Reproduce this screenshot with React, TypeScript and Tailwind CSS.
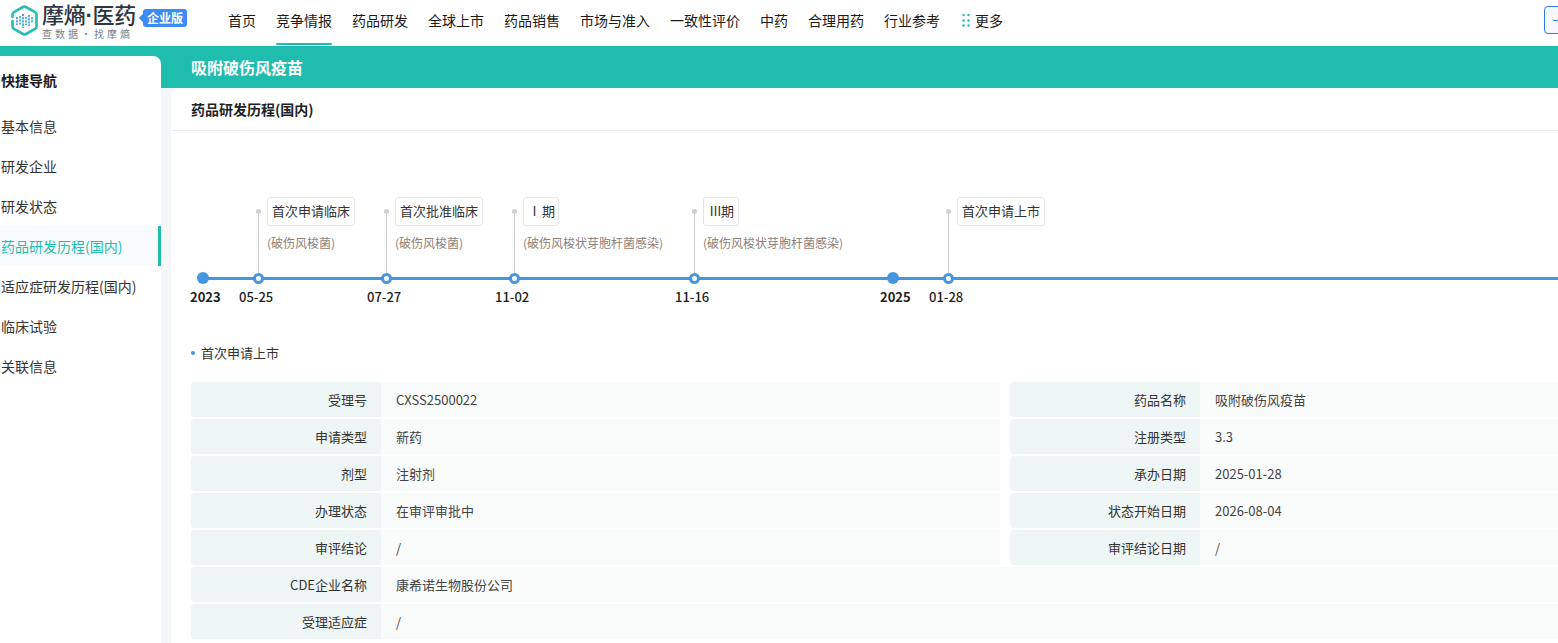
const navItems = ["首页", "竞争情报", "药品研发", "全球上市", "药品销售", "市场与准入", "一致性评价", "中药", "合理用药", "行业参考"];

const sideItems = ["基本信息", "研发企业", "研发状态", "药品研发历程(国内)", "适应症研发历程(国内)", "临床试验", "关联信息"];

type Milestone = {
  date: string;
  label?: string;
  note?: string;
  width: string;
  year?: boolean;
  narrow?: boolean;
};

const milestones: Milestone[] = [
  { date: "2023", width: "w-[67px]", year: true },
  { date: "05-25", label: "首次申请临床", note: "(破伤风梭菌)", width: "w-[128px]" },
  { date: "07-27", label: "首次批准临床", note: "(破伤风梭菌)", width: "w-[128px]" },
  { date: "11-02", label: "Ⅰ 期", note: "(破伤风梭状芽胞杆菌感染)", width: "w-[180px]", narrow: true },
  { date: "11-16", label: "Ⅲ期", note: "(破伤风梭状芽胞杆菌感染)", width: "w-[187px]", narrow: true },
  { date: "2025", width: "w-[67px]", year: true },
  { date: "01-28", label: "首次申请上市", width: "w-[200px]" },
];

const rows: [string, string, string?, string?][] = [
  ["受理号", "CXSS2500022", "药品名称", "吸附破伤风疫苗"],
  ["申请类型", "新药", "注册类型", "3.3"],
  ["剂型", "注射剂", "承办日期", "2025-01-28"],
  ["办理状态", "在审评审批中", "状态开始日期", "2026-08-04"],
  ["审评结论", "/", "审评结论日期", "/"],
  ["CDE企业名称", "康希诺生物股份公司"],
  ["受理适应症", "/"],
];

const Logo = () => (
  <div className="flex items-center w-[187px] ml-[11px] shrink-0">
    <svg width="27" height="31" viewBox="0 0 27 31" className="shrink-0 mb-[6px]">
      <path
        d="M1.5 12 V9.5 Q1.5 8 3 7.2 L12 2 Q13.5 1.2 15 2 L24 7.2 Q25.5 8 25.5 9.5 V21.5 Q25.5 23 24 23.8 L15 29 Q13.5 29.8 12 29 L3 23.8 Q1.5 23 1.5 21.5 V16"
        fill="none"
        stroke="#25bdb4"
        strokeWidth="2.6"
        strokeLinecap="round"
      />
      <path d="M6 12v8M12 9v14M18 10v11" stroke="#3a8fe6" strokeWidth="1.7" strokeDasharray="2.2 1" />
      <path d="M9 11v9M15 12v8M21 12v6" stroke="#25bdb4" strokeWidth="1.7" strokeDasharray="2.2 1" />
    </svg>
    <div className="flex flex-col ml-[4px] w-[95px] mb-[6px]">
      <span className="text-[22px] leading-[24px] font-medium text-[#2c3440] whitespace-nowrap tracking-[-0.25px]">
        摩熵<span className="font-['Liberation_Sans'] font-bold">·</span>医药
      </span>
      <span className="text-[10px] leading-[11px] text-[#7a8087] whitespace-nowrap tracking-[3px]">查数据·找摩熵</span>
    </div>
    <div className="relative ml-[6px] mb-[10px] h-[18px] w-[44px] bg-[#3d8bf7] rounded-[3px] flex items-center justify-center text-[12px] font-bold text-white whitespace-nowrap">
      <span className="absolute left-[-3px] top-[6px] w-[6px] h-[6px] bg-[#3d8bf7] rotate-45" />
      <span className="relative">企业版</span>
    </div>
  </div>
);

const Header = () => (
  <header className="h-[46px] bg-white flex items-stretch shrink-0">
    <Logo />
    <nav className="flex gap-[20px] ml-[30px] shrink-0">
      {navItems.map((item) => (
        <div
          key={item}
          className={
            item === "竞争情报"
              ? "relative h-[45px] pb-[4px] flex items-center text-[14px] text-[#1a1a1a] whitespace-nowrap"
              : "h-[45px] pb-[4px] flex items-center text-[14px] text-[#1a1a1a] whitespace-nowrap"
          }
        >
          {item}
          {item === "竞争情报" && <span className="absolute left-0 right-0 bottom-0 h-[2px] rounded-full bg-[#1fbdae]" />}
        </div>
      ))}
      <div className="h-[45px] pb-[4px] ml-[2px] flex items-center gap-[4px] text-[14px] text-[#1a1a1a] whitespace-nowrap">
        <svg width="9" height="13" viewBox="0 0 9 13">
          {[1, 6.5, 11.5].flatMap((y) => [1.5, 6.5].map((x) => <circle key={`${x}-${y}`} cx={x} cy={y} r="1.2" fill="#1fbdae" />))}
        </svg>
        更多
      </div>
    </nav>
    <button className="ml-[541px] mt-[6px] h-[28px] w-[60px] shrink-0 rounded-[4px] border border-[#2f7bf0] bg-[#f5f9ff] flex items-center pl-[8px]">
      <span className="w-[8px] h-[1px] bg-[#2f7bf0]" />
    </button>
  </header>
);

const Sidebar = () => (
  <aside className="w-[161px] shrink-0 bg-white rounded-tr-[8px] mt-[-32px] relative">
    <div className="h-[50px] pb-[2px] flex items-center text-[14px] font-bold text-[#1a1a1a] pl-[1px]">快捷导航</div>
    <ul className="flex flex-col">
      {sideItems.map((item) => (
        <li
          key={item}
          className={
            item === "药品研发历程(国内)"
              ? "h-[40px] flex items-center pl-[1px] text-[14px] whitespace-nowrap text-[#1fbdae] bg-[#f8fbfd] border-r-[3px] border-[#1fbdae]"
              : "h-[40px] flex items-center pl-[1px] text-[14px] whitespace-nowrap text-[#333333]"
          }
        >
          {item}
        </li>
      ))}
    </ul>
  </aside>
);

const Timeline = () => (
  <div className="relative flex h-[147px] mt-[66px] ml-[20px]">
    <div className="absolute left-[12px] right-0 top-[80px] h-[3px] bg-[#4596dc]" />
    {milestones.map((m) =>
      m.year ? (
        <div key={m.date} className={`relative ${m.width} shrink-0`}>
          <span className="absolute left-[6px] top-[75px] w-[12px] h-[12px] rounded-full bg-[#4596dc]" />
          <span className="absolute left-[-1px] top-[90px] text-[13px] font-bold text-[#222222] leading-[20px]">{m.date}</span>
        </div>
      ) : (
        <div key={m.date} className={`relative ${m.width} shrink-0`}>
          <span className="absolute left-[-2px] top-[12px] w-[5px] h-[5px] rounded-full bg-[#cfd0d6]" />
          <span className="absolute left-0 top-[14px] w-[1px] h-[64px] bg-[#cfd0d6]" />
          <span className="absolute left-[-5px] top-[76px] w-[11px] h-[11px] rounded-full bg-white border-[3px] border-[#4596dc]" />
          <span className="absolute left-[-19px] top-[90px] text-[13px] font-medium text-[#222222] leading-[20px]">{m.date}</span>
          <div
            className={
              m.narrow
                ? "absolute left-[9px] top-0 h-[29px] w-[36px] pb-[1px] flex items-center justify-center rounded-[3px] border border-[#e2e6ec] bg-white text-[13px] text-[#333333] whitespace-nowrap tracking-[-1px]"
                : "absolute left-[9px] top-0 h-[29px] px-[4px] pb-[1px] flex items-center rounded-[3px] border border-[#e2e6ec] bg-white text-[13px] text-[#333333] whitespace-nowrap"
            }
          >
            {m.label}
          </div>
          {m.note && <div className="absolute left-[9px] top-[37px] text-[12px] leading-[18px] text-[#8a8078] whitespace-nowrap">{m.note}</div>}
        </div>
      ),
    )}
  </div>
);

const Label = ({ text }: { text: string }) => (
  <div className="w-[190px] shrink-0 h-full flex items-center justify-end pr-[14px] bg-[#eef5f5] rounded-l-[4px] text-[13px] text-[#333333] whitespace-nowrap">
    {text}
  </div>
);

const Value = ({ text }: { text: string }) => (
  <div className="flex-1 h-full flex items-center pl-[15px] bg-[#f9fbfb] text-[13px] text-[#444444] whitespace-nowrap">{text}</div>
);

const InfoTable = () => (
  <div className="grid grid-cols-[809px_809px] gap-x-[10px] gap-y-[2px] ml-[20px]">
    {rows.map(([l1, v1, l2, v2]) =>
      l2 ? (
        <div key={l1} className="contents">
          <div className="flex h-[35px]">
            <Label text={l1} />
            <Value text={v1} />
          </div>
          <div className="flex h-[35px]">
            <Label text={l2} />
            <Value text={v2 ?? ""} />
          </div>
        </div>
      ) : (
        <div key={l1} className="flex h-[35px] col-span-2">
          <Label text={l1} />
          <Value text={v1} />
        </div>
      ),
    )}
  </div>
);

export default function App() {
  return (
    <div
      className="w-[1558px] h-[643px] overflow-hidden bg-[#f5f6f8] flex flex-col"
      style={{ fontFamily: '"Noto Sans CJK SC", "Noto Sans", sans-serif' }}
    >
      <Header />
      <div className="h-[42px] bg-[#1fbdae] shrink-0 flex items-center pl-[191px] text-[16px] font-bold text-white">吸附破伤风疫苗</div>
      <div className="flex flex-1 min-h-0">
        <Sidebar />
        <main className="ml-[10px] flex-1 min-w-0 bg-white rounded-tl-[8px] overflow-hidden">
          <div className="h-[43px] border-b border-[#eeeeee] flex items-center pl-[20px] text-[14px] font-bold text-[#222222]">药品研发历程(国内)</div>
          <Timeline />
          <div className="flex items-center ml-[20px] h-[20px] mt-[-1px] mb-[19px] text-[13px] text-[#333333]">
            <span className="w-[4px] h-[4px] rounded-full bg-[#4596dc] mr-[6px]" />
            首次申请上市
          </div>
          <InfoTable />
        </main>
      </div>
    </div>
  );
}
